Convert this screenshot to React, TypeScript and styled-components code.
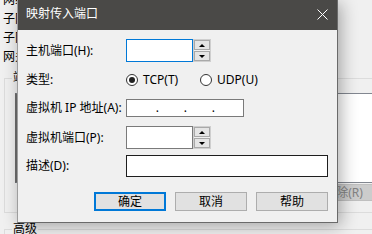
import React from "react";
import styled, { createGlobalStyle } from "styled-components";

const GlobalStyle = createGlobalStyle`
  html, body {
    margin: 0;
    padding: 0;
  }
  body {
    background: #f0f0f0;
    font-family: "Noto Sans", "Noto Sans CJK SC", sans-serif;
    font-size: 12px;
    color: #000;
  }
`;

const Screen = styled.div`
  position: relative;
  width: 372px;
  height: 234px;
  overflow: hidden;
  background: #f0f0f0;
`;

/* ---- window behind the dialog ---- */

const InfoRows = styled.ul`
  margin: -10px 0 0;
  padding: 0 0 0 3px;
  list-style: none;
  li {
    height: 19px;
    line-height: 19px;
    white-space: nowrap;
  }
`;

const GroupBox = styled.fieldset<{ $top: number; $height: number }>`
  box-sizing: border-box;
  margin: ${(p) => p.$top}px 0 0 4px;
  padding: 0 0 0 7px;
  width: 420px;
  min-width: 0;
  height: ${(p) => p.$height}px;
  border: 1px solid #dcdcdc;
  legend {
    padding: 0 1px;
    line-height: 16px;
    white-space: nowrap;
  }
`;

const PortList = styled.div`
  margin: 7px 0 0 3px;
  height: 88px;
  background: #fff;
  border: 1px solid #828790;
  border-left: 2px solid #6d6d6d;
`;

const BackButtons = styled.div`
  display: flex;
  gap: 6px;
  margin: 1px 0 0 213px;
`;

const BackButton = styled.div<{ $disabled?: boolean }>`
  box-sizing: border-box;
  flex-shrink: 0;
  width: 75px;
  height: 17px;
  line-height: 15px;
  text-align: center;
  background: ${(p) => (p.$disabled ? "#cccccc" : "#e1e1e1")};
  border: 1px solid ${(p) => (p.$disabled ? "#bfbfbf" : "#adadad")};
  color: ${(p) => (p.$disabled ? "#838383" : "#000")};
`;

/* ---- dialog ---- */

const Dialog = styled.div`
  position: absolute;
  left: 17px;
  top: 0;
  box-sizing: border-box;
  width: 321px;
  height: 223px;
  display: flex;
  flex-direction: column;
  background: #f0f0f0;
  border: 1px solid #6a6a6a;
  border-left-color: #9d9d9d;
  border-top: none;
  box-shadow: 3px 3px 16px rgba(0, 0, 0, 0.32);
`;

const TitleBar = styled.div`
  height: 30px;
  flex-shrink: 0;
  display: flex;
  align-items: center;
  justify-content: space-between;
  padding-left: 8px;
  background: #4a4947;
  color: #fff;
`;

const TitleText = styled.span`
  line-height: 16px;
  padding-bottom: 2px;
`;

const CloseButton = styled.div`
  width: 30px;
  height: 30px;
  display: flex;
  align-items: center;
  justify-content: center;
  padding-bottom: 2px;
  box-sizing: border-box;
`;

const Body = styled.div`
  display: flex;
  flex-direction: column;
  padding: 0 9px 0 8px;
`;

const Row = styled.div<{ $mt: number; $h: number }>`
  display: flex;
  align-items: center;
  margin-top: ${(p) => p.$mt}px;
  height: ${(p) => p.$h}px;
`;

const Label = styled.span`
  width: 100px;
  flex-shrink: 0;
  line-height: 16px;
  white-space: nowrap;
`;

const TextBox = styled.div<{ $w: number; $h: number; $border: string }>`
  box-sizing: border-box;
  width: ${(p) => p.$w}px;
  height: ${(p) => p.$h}px;
  background: #fff;
  border: 1px solid ${(p) => p.$border};
`;

const Spinner = styled.div`
  box-sizing: border-box;
  width: 18px;
  height: 23px;
  display: flex;
  flex-direction: column;
  gap: 1px;
  border: 1px solid #cfcfcf;
  background: #f0f0f0;
`;

const SpinButton = styled.div<{ $down?: boolean }>`
  box-sizing: border-box;
  height: 10px;
  display: flex;
  align-items: center;
  justify-content: center;
  background: #e5e5e5;
  border: 1px solid #a9a9a9;
  &::after {
    content: "";
    width: 0;
    height: 0;
    border-left: 3px solid transparent;
    border-right: 3px solid transparent;
    ${(p) =>
      p.$down
        ? "border-top: 3px solid #000;"
        : "border-bottom: 3px solid #000;"}
  }
`;

const RadioGroup = styled.div`
  display: grid;
  grid-template-columns: 74px auto;
  align-items: center;
`;

const RadioItem = styled.div`
  display: flex;
  align-items: center;
  gap: 5px;
  line-height: 16px;
`;

const RadioCircle = styled.span<{ $checked?: boolean }>`
  box-sizing: border-box;
  width: 12px;
  height: 12px;
  border-radius: 50%;
  border: 1px solid #333;
  background: #fff;
  display: flex;
  align-items: center;
  justify-content: center;
  &::after {
    content: "";
    width: 6px;
    height: 6px;
    border-radius: 50%;
    background: ${(p) => (p.$checked ? "#222" : "transparent")};
  }
`;

const IpBox = styled.div`
  box-sizing: border-box;
  width: 118px;
  height: 18px;
  padding-left: 4px;
  display: grid;
  grid-template-columns: repeat(4, 28px);
  background: #fff;
  border: 1px solid #7a7a7a;
`;

const IpCell = styled.span`
  text-align: right;
  line-height: 15px;
`;

const ButtonRow = styled.div`
  display: flex;
  justify-content: flex-end;
  gap: 9px;
  margin-top: 15px;
`;

const DialogButton = styled.div<{ $default?: boolean }>`
  box-sizing: border-box;
  width: 72px;
  height: 19px;
  display: flex;
  align-items: center;
  justify-content: center;
  line-height: 16px;
  background: #e1e1e1;
  border: ${(p) => (p.$default ? "2px solid #0078d7" : "1px solid #adadad")};
`;

export default function App() {
  return (
    <>
      <GlobalStyle />
      <Screen>
        <InfoRows>
          <li>网络: vmnet8</li>
          <li>子网 IP: 192.168.80.0</li>
          <li>子网掩码: 255.255.255.0</li>
          <li>网关 IP(G): 192.168.80.2</li>
        </InfoRows>
        <GroupBox $top={4} $height={143}>
          <legend>端口转发(F)</legend>
          <PortList />
          <BackButtons>
            <BackButton>添加(A)...</BackButton>
            <BackButton $disabled>移除(R)</BackButton>
          </BackButtons>
        </GroupBox>
        <GroupBox $top={8} $height={60}>
          <legend>高级</legend>
        </GroupBox>

        <Dialog>
          <TitleBar>
            <TitleText>映射传入端口</TitleText>
            <CloseButton>
              <svg width="11" height="11" viewBox="0 0 11 11">
                <path d="M0.5 0.5 L10.5 10.5 M10.5 0.5 L0.5 10.5" stroke="#fff" strokeWidth="1" />
              </svg>
            </CloseButton>
          </TitleBar>
          <Body>
            <Row $mt={9} $h={23}>
              <Label>主机端口(H):</Label>
              <TextBox $w={67} $h={23} $border="#0078d7" />
              <Spinner>
                <SpinButton />
                <SpinButton $down />
              </Spinner>
            </Row>
            <Row $mt={9} $h={17}>
              <Label>类型:</Label>
              <RadioGroup>
                <RadioItem>
                  <RadioCircle $checked />
                  TCP(T)
                </RadioItem>
                <RadioItem>
                  <RadioCircle />
                  UDP(U)
                </RadioItem>
              </RadioGroup>
            </Row>
            <Row $mt={11} $h={18}>
              <Label>虚拟机 IP 地址(A):</Label>
              <IpBox>
                <IpCell>.</IpCell>
                <IpCell>.</IpCell>
                <IpCell>.</IpCell>
                <IpCell />
              </IpBox>
            </Row>
            <Row $mt={9} $h={23}>
              <Label>虚拟机端口(P):</Label>
              <TextBox $w={67} $h={23} $border="#7a7a7a" />
              <Spinner>
                <SpinButton />
                <SpinButton $down />
              </Spinner>
            </Row>
            <Row $mt={6} $h={22}>
              <Label>描述(D):</Label>
              <TextBox $w={202} $h={22} $border="#1e1e1e" />
            </Row>
            <ButtonRow>
              <DialogButton $default>确定</DialogButton>
              <DialogButton>取消</DialogButton>
              <DialogButton>帮助</DialogButton>
            </ButtonRow>
          </Body>
        </Dialog>
      </Screen>
    </>
  );
}
